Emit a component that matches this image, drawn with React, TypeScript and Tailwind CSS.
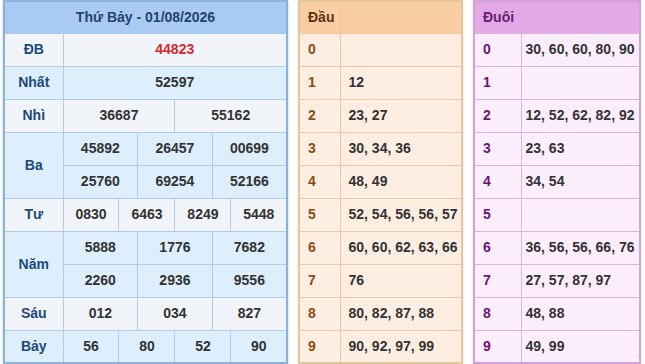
const font = { fontFamily: '"Liberation Sans", Arial, sans-serif' };

type Prize = { label: string; rows: string[][]; blue: boolean };

const prizes: Prize[] = [
  { label: "ĐB", rows: [["44823"]], blue: false },
  { label: "Nhất", rows: [["52597"]], blue: true },
  { label: "Nhì", rows: [["36687", "55162"]], blue: false },
  { label: "Ba", rows: [["45892", "26457", "00699"], ["25760", "69254", "52166"]], blue: true },
  { label: "Tư", rows: [["0830", "6463", "8249", "5448"]], blue: false },
  { label: "Năm", rows: [["5888", "1776", "7682"], ["2260", "2936", "9556"]], blue: true },
  { label: "Sáu", rows: [["012", "034", "827"]], blue: false },
  { label: "Bảy", rows: [["56", "80", "52", "90"]], blue: true },
];

const dau = ["", "12", "23, 27", "30, 34, 36", "48, 49", "52, 54, 56, 56, 57", "60, 60, 62, 63, 66", "76", "80, 82, 87, 88", "90, 92, 97, 99"];
const duoi = ["30, 60, 60, 80, 90", "", "12, 52, 62, 82, 92", "23, 63", "34, 54", "", "36, 56, 56, 66, 76", "27, 57, 87, 97", "48, 88", "49, 99"];

function ResultTable() {
  return (
    <table className="w-[285px] table-fixed border-collapse border-2 border-[#8bb1dc] shadow-[0_2px_2px_rgba(60,100,160,0.35)]">
      <colgroup>
        <col className="w-[59px]" />
        {Array.from({ length: 12 }).map((_, i) => (
          <col key={i} />
        ))}
      </colgroup>
      <thead>
        <tr className="h-[32px] bg-[#a9caf3]">
          <th colSpan={13} className="text-[14px] font-bold text-[#22446e] border-b border-[#a9c6e8]">
            Thứ Bảy - 01/08/2026
          </th>
        </tr>
      </thead>
      <tbody>
        {prizes.map((p) =>
          p.rows.map((r, ri) => (
            <tr key={p.label + ri} className={`h-[33px] ${p.blue ? "bg-[#ddeefd]" : "bg-[#f1f4f8]"}`}>
              {ri === 0 && (
                <td rowSpan={p.rows.length} className="border border-[#b3cbe6] text-center text-[14px] font-bold text-[#1b4a78]">
                  {p.label}
                </td>
              )}
              {r.map((v, vi) => (
                <td
                  key={vi}
                  colSpan={12 / r.length}
                  className={`border border-[#b3cbe6] text-center text-[14px] font-bold ${p.label === "ĐB" ? "text-[#d9262e]" : "text-[#333]"}`}
                >
                  {v}
                </td>
              ))}
            </tr>
          ))
        )}
      </tbody>
    </table>
  );
}

function LotoTable({
  title,
  data,
  width,
  first,
  pad,
  head,
  body,
  line,
  outer,
  titleColor,
  digitColor,
}: {
  title: string;
  data: string[];
  width: string;
  first: string;
  pad: string;
  head: string;
  body: string;
  line: string;
  outer: string;
  titleColor: string;
  digitColor: string;
}) {
  return (
    <table className={`${width} table-fixed border-collapse border-2 ${outer} shadow-[0_2px_2px_rgba(150,110,80,0.3)] ${body}`}>
      <colgroup>
        <col className={first} />
        <col />
      </colgroup>
      <thead>
        <tr className={`h-[32px] ${head}`}>
          <th className={`border-r border-b ${line} text-left pl-[8px] text-[14px] font-bold ${titleColor}`}>{title}</th>
          <th className={`border-b ${line}`}></th>
        </tr>
      </thead>
      <tbody>
        {data.map((v, i) => (
          <tr key={i} className="h-[33px]">
            <td className={`border ${line} pl-[8px] text-[14px] font-bold ${digitColor}`}>{i}</td>
            <td className={`border ${line} ${pad} text-[14px] font-bold text-[#333] whitespace-nowrap`}>{v}</td>
          </tr>
        ))}
      </tbody>
    </table>
  );
}

export default function App() {
  return (
    <div className="w-[645px] h-[364px] bg-white flex items-start gap-[10px] pl-[3px]" style={font}>
      <ResultTable />
      <LotoTable
        title="Đầu"
        data={dau}
        width="w-[165px]"
        first="w-[41px]"
        pad="pl-[8px]"
        head="bg-[#f9cea2]"
        body="bg-[#fdeee1]"
        line="border-[#ecc9a6]"
        outer="border-[#e6c49c]"
        titleColor="text-[#5e3312]"
        digitColor="text-[#8d4d12]"
      />
      <LotoTable
        title="Đuôi"
        data={duoi}
        width="w-[168px]"
        first="w-[47px]"
        pad="pl-[4px]"
        head="bg-[#e2a9e6]"
        body="bg-[#fdeefd]"
        line="border-[#dcb2e0]"
        outer="border-[#d2a2d8]"
        titleColor="text-[#6a1f6e]"
        digitColor="text-[#6d1474]"
      />
    </div>
  );
}
